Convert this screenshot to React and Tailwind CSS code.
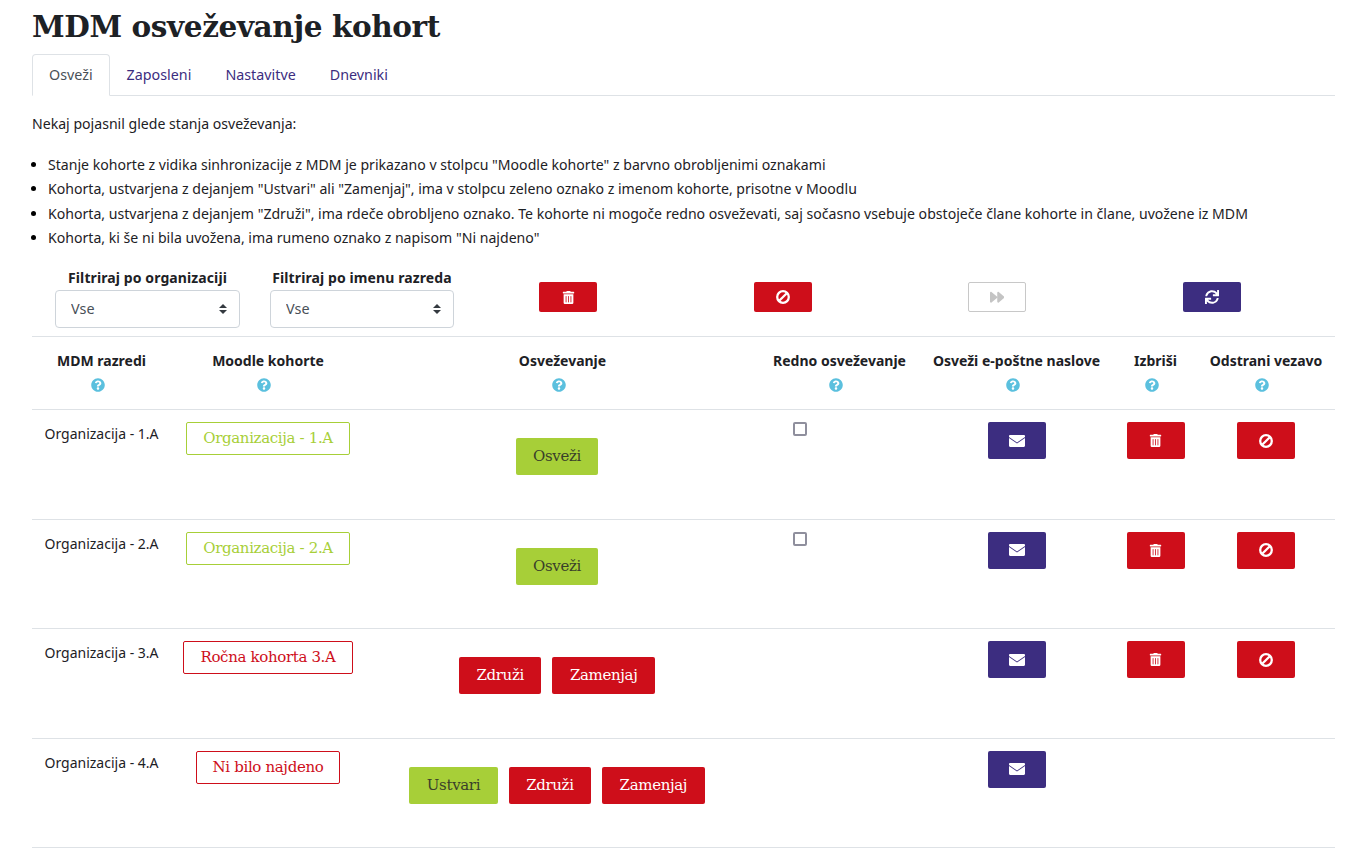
import { FaForward, FaQuestionCircle, FaSync, FaTrashAlt } from 'react-icons/fa';

const notes = [
  'Stanje kohorte z vidika sinhronizacije z MDM je prikazano v stolpcu "Moodle kohorte" z barvno obrobljenimi oznakami',
  'Kohorta, ustvarjena z dejanjem "Ustvari" ali "Zamenjaj", ima v stolpcu zeleno oznako z imenom kohorte, prisotne v Moodlu',
  'Kohorta, ustvarjena z dejanjem "Združi", ima rdeče obrobljeno oznako. Te kohorte ni mogoče redno osveževati, saj sočasno vsebuje obstoječe člane kohorte in člane, uvožene iz MDM',
  'Kohorta, ki še ni bila uvožena, ima rumeno oznako z napisom "Ni najdeno"',
];

const headers = [
  'MDM razredi',
  'Moodle kohorte',
  'Osveževanje',
  'Redno osveževanje',
  'Osveži e-poštne naslove',
  'Izbriši',
  'Odstrani vezavo',
];

const rows = [
  { name: 'Organizacija - 1.A', cohort: 'Organizacija - 1.A', tone: 'green', actions: ['Osveži'], check: true, remove: true },
  { name: 'Organizacija - 2.A', cohort: 'Organizacija - 2.A', tone: 'green', actions: ['Osveži'], check: true, remove: true },
  { name: 'Organizacija - 3.A', cohort: 'Ročna kohorta 3.A', tone: 'red', actions: ['Združi', 'Zamenjaj'], remove: true },
  { name: 'Organizacija - 4.A', cohort: 'Ni bilo najdeno', tone: 'red', actions: ['Ustvari', 'Združi', 'Zamenjaj'] },
];

const columns = 'grid grid-cols-[139px_194px_395px_159px_195px_83px_138px]';

function MailIcon() {
  return (
    <svg width="16" height="12" viewBox="0 0 16 12">
      <path d="M1.2 0h13.6C15.5 0 16 .5 16 1.2V2L8 7.4 0 2v-.8C0 .5.5 0 1.2 0z" fill="#fff" />
      <path d="M0 3 8 8.400l8-5.400v7.800c0 .7-.5 1.200-1.200 1.200H1.200C.5 12 0 11.500 0 10.800z" fill="#fff" />
    </svg>
  );
}

function BanIcon() {
  return (
    <svg width="14" height="14" viewBox="0 0 14 14" fill="none" stroke="#fff" strokeWidth="2.3">
      <circle cx="7" cy="7" r="5.800" />
      <path d="M3.200 10.800 10.800 3.200" />
    </svg>
  );
}

function IconButton({ color, children, height = 'h-[37px]' }) {
  const colors = {
    red: 'bg-[#ce0e1a] text-white',
    purple: 'bg-[#3c2d80] text-white',
    ghost: 'border border-[#c8c8c8] bg-white text-[#c4c4c4]',
  };
  return (
    <button type="button" className={`flex w-[58px] items-center justify-center rounded-[2px] text-[14px] ${height} ${colors[color]}`}>
      {children}
    </button>
  );
}

function ActionButton({ label }) {
  const color = label === 'Zamenjaj' || label === 'Združi' ? 'bg-[#ce0e1a] text-white' : 'bg-[#a7cf38] text-[#3a3f2a]';
  return (
    <button type="button" className={`mr-[11px] h-[37px] rounded-[2px] px-[17.5px] font-['DejaVu_Serif',serif] text-[15px] tracking-[-0.35px] ${color}`}>
      {label}
    </button>
  );
}

function FilterSelect({ label, width }) {
  return (
    <div className="flex flex-col items-center">
      <label className="-mt-[1px] text-[14px] leading-[20px] font-bold tracking-[0.1px] text-[#1d2125]">{label}</label>
      <div className={`relative mt-[2px] ${width}`}>
        <select className="h-[38px] w-full appearance-none rounded-[4px] border border-[#ced4da] bg-white pb-[1px] pl-[15px] text-[14.4px] text-[#495057]">
          <option>Vse</option>
        </select>
        <svg className="absolute top-[14px] right-[13px]" width="8" height="10" viewBox="0 0 8 10">
          <path d="M4 0 8 4H0zM4 10 0 6h8z" fill="#343a40" />
        </svg>
      </div>
    </div>
  );
}

export default function App() {
  return (
    <div className="h-[849px] overflow-hidden bg-white pr-[33px] pl-[32px] font-['Noto_Sans',sans-serif] text-[#1d2125]">
      <h1 className="pt-[5px] font-['DejaVu_Serif',serif] text-[29.5px] leading-[44px] font-bold tracking-[-0.4px]">MDM osveževanje kohort</h1>

      <nav className="mt-[5px] flex h-[42px] border-b border-[#dee2e6] text-[14.3px]">
        <a className="h-[42px] rounded-t-[4px] border border-[#dee2e6] border-b-white bg-white px-[16px] leading-[40px] text-[#495057]">Osveži</a>
        <a className="px-[17px] leading-[42px] text-[#3c2d80]">Zaposleni</a>
        <a className="px-[17px] leading-[42px] text-[#3c2d80]">Nastavitve</a>
        <a className="px-[17px] leading-[42px] text-[#3c2d80]">Dnevniki</a>
      </nav>

      <p className="mt-[16px] text-[14.1px] leading-[24px]">Nekaj pojasnil glede stanja osveževanja:</p>

      <ul className="mt-[17px] list-disc pl-[16px] text-[14.1px] leading-[24.3px] marker:text-[#000]">
        {notes.map((note) => (
          <li key={note}>{note}</li>
        ))}
      </ul>

      <div className="mt-[19px] grid h-[68px] grid-cols-[231px_198px_214px_216px_212px_218px] border-b border-[#dee2e6]">
        <FilterSelect label="Filtriraj po organizaciji" width="w-[185px]" />
        <FilterSelect label="Filtriraj po imenu razreda" width="w-[184px]" />
        <div className="flex justify-center pt-[13px]"><IconButton color="red" height="h-[30px]"><FaTrashAlt className="text-[13px]" /></IconButton></div>
        <div className="flex justify-center pt-[13px]"><IconButton color="red" height="h-[30px]"><BanIcon /></IconButton></div>
        <div className="flex justify-center pt-[13px]"><IconButton color="ghost" height="h-[30px]"><FaForward className="text-[14.5px]" /></IconButton></div>
        <div className="flex justify-center pt-[13px]"><IconButton color="purple" height="h-[30px]"><FaSync className="text-[14px]" /></IconButton></div>
      </div>

      <div className={`${columns} h-[73px] border-b border-[#dee2e6] pt-[14px]`}>
        {headers.map((header) => (
          <div key={header} className="text-center text-[14px] leading-[20px] font-bold">
            <div>{header}</div>
            <div className="mt-[7px] flex justify-center">
              <FaQuestionCircle className="mr-[8px] text-[14px] text-[#5bc0de]" />
            </div>
          </div>
        ))}
      </div>

      {rows.map((row) => (
        <div key={row.name} className={`${columns} h-[109.5px] border-b border-[#dee2e6] pt-[12px]`}>
          <div className="pt-[2px] text-center text-[14px] leading-[20px]">{row.name}</div>
          <div className="flex items-start justify-center">
            <span className={`rounded-[2px] border bg-white px-[16px] font-['DejaVu_Serif',serif] text-[15px] leading-[31px] tracking-[-0.35px] ${row.tone === 'green' ? 'border-[#a7cf38] text-[#a7cf38]' : 'border-[#ce0e1a] text-[#ce0e1a]'}`}>
              {row.cohort}
            </span>
          </div>
          <div className="flex items-start justify-center pt-[16px]">
            {row.actions.map((action) => (
              <ActionButton key={action} label={action} />
            ))}
          </div>
          <div className="flex items-start justify-center">
            {row.check && <input type="checkbox" className="mr-[79px] h-[14px] w-[14px] appearance-none rounded-[2px] border-2 border-[#8f8f9d] bg-white" />}
          </div>
          <div className="flex items-start justify-center">
            <IconButton color="purple"><MailIcon /></IconButton>
          </div>
          <div className="flex items-start justify-center">
            {row.remove && <IconButton color="red"><FaTrashAlt className="text-[13px]" /></IconButton>}
          </div>
          <div className="flex items-start justify-center">
            {row.remove && <IconButton color="red"><BanIcon /></IconButton>}
          </div>
        </div>
      ))}
    </div>
  );
}
